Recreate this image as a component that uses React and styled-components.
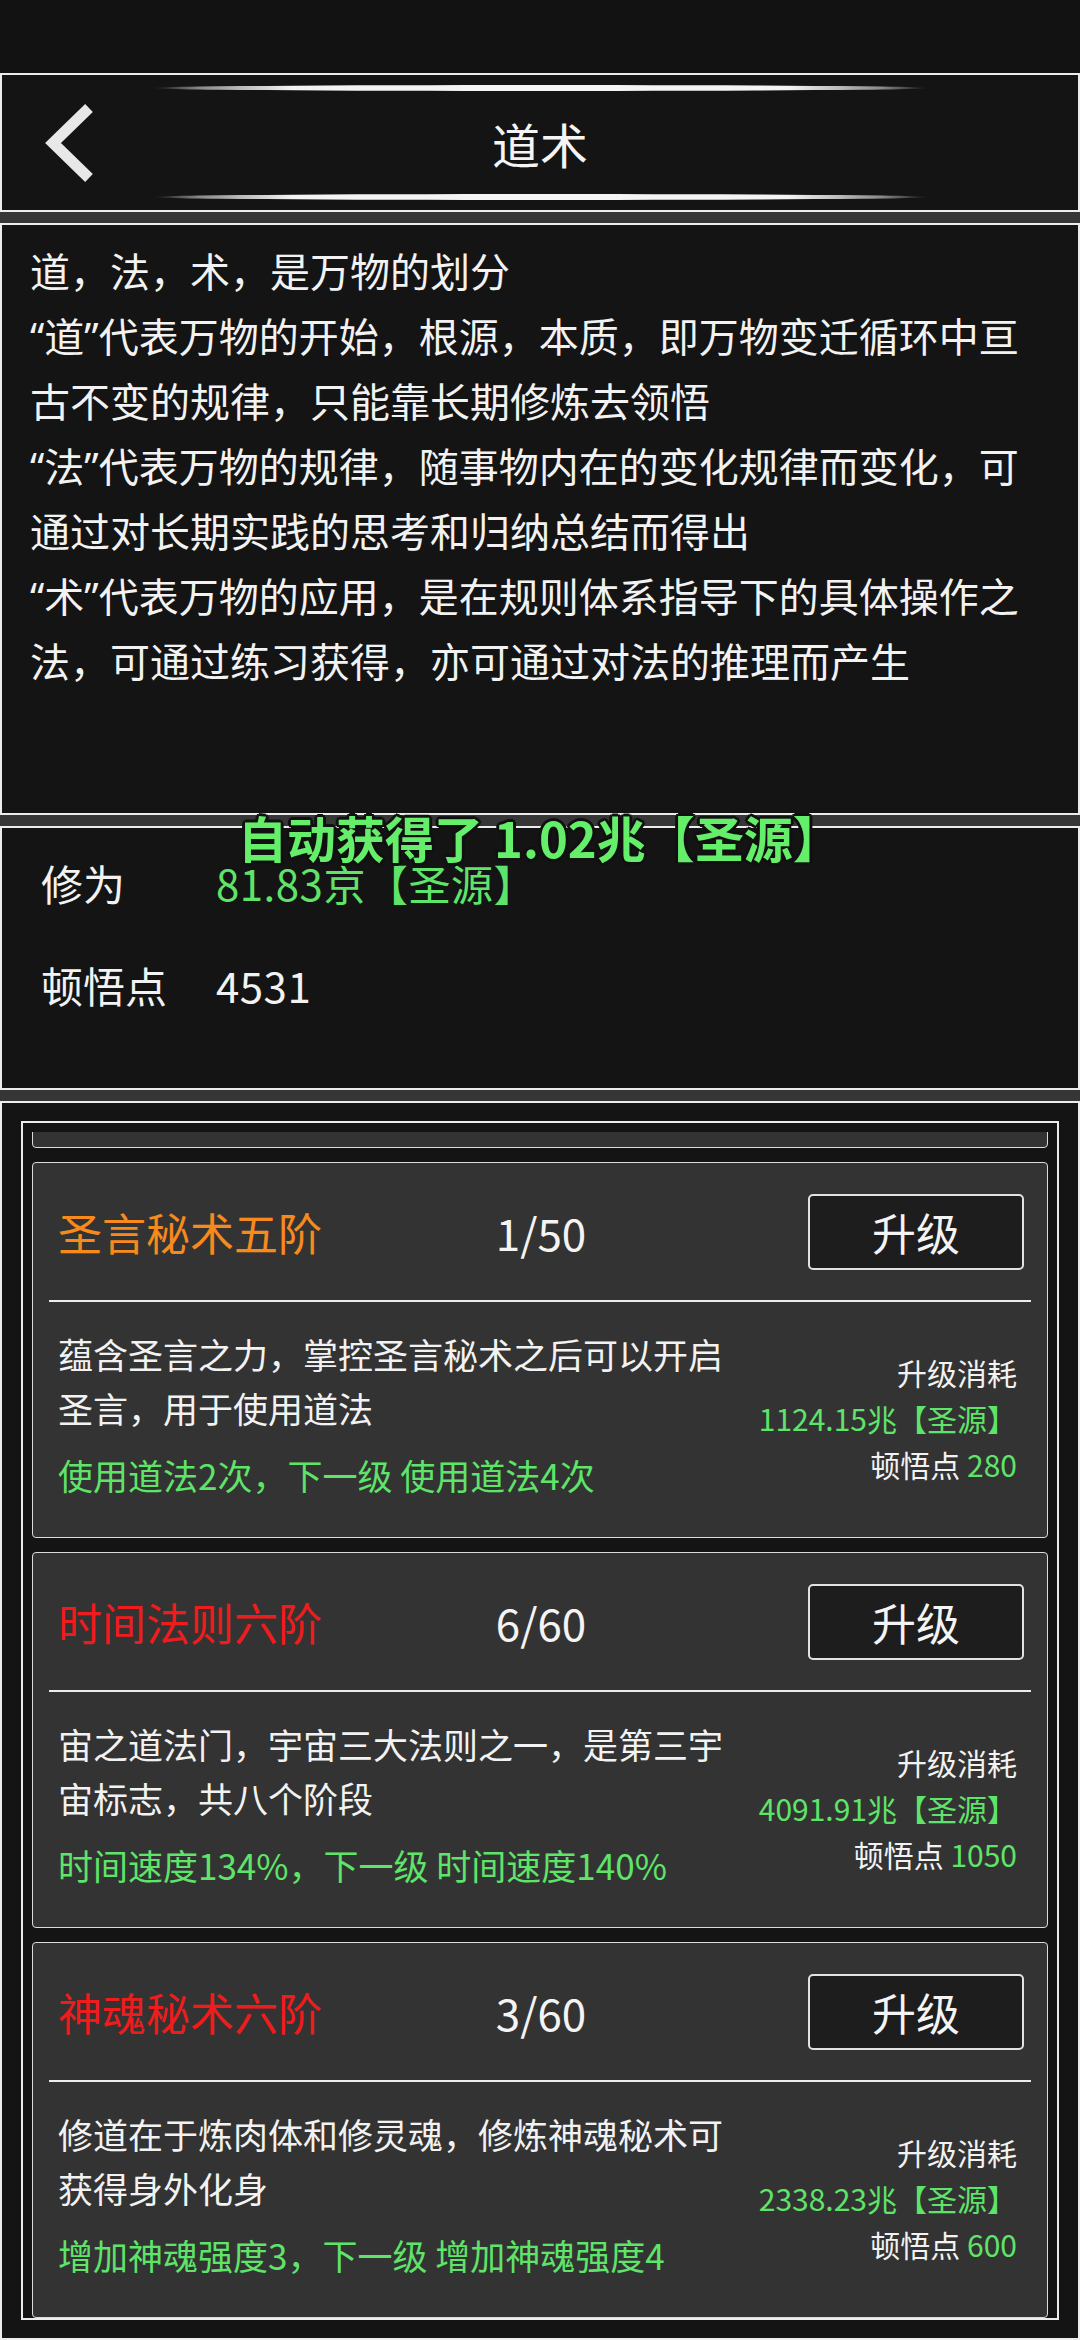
import React, { useLayoutEffect, useRef } from 'react'
import styled, { createGlobalStyle } from 'styled-components'

const GlobalStyle = createGlobalStyle`
  * {
    box-sizing: border-box;
  }
  html,
  body {
    margin: 0;
    padding: 0;
    background-color: #363636;
  }
  body {
    width: 1080px;
    height: 2340px;
    overflow: hidden;
    font-family: 'Noto Sans CJK SC', 'Noto Sans', sans-serif;
    color: #f2f2f2;
  }
`

const GREEN = '#5fe46a'

const StyledStatusBar = styled.div`
  height: 73px;
  background-color: #121212;
`

const StyledPanel = styled.section`
  position: relative;
  background-color: #141414;
  border: 2px solid #ececec;
  ${({ $gap }) => $gap && 'margin-top: 11px;'}
  ${({ $height }) => $height && `height: ${$height}px;`}
`

const StyledHeader = styled(StyledPanel)`
  display: flex;
  flex-direction: column;
  align-items: center;
  padding: 10px 0;
`

const StyledGlowLine = styled.div`
  width: 775px;
  height: 6px;
  border-radius: 50%;
  background: linear-gradient(
    90deg,
    rgba(242, 242, 242, 0) 0%,
    #8a8a8a 6%,
    #f4f4f4 18%,
    #f4f4f4 82%,
    #8a8a8a 94%,
    rgba(242, 242, 242, 0) 100%
  );
`

const StyledTitleRow = styled.div`
  flex: 1;
  align-self: stretch;
  display: grid;
  grid-template-columns: 1fr auto 1fr;
  align-items: center;
  padding: 0 38px;
`

const StyledBack = styled.svg`
  display: block;
  width: 60px;
  height: 80px;
`

const StyledTitle = styled.h1`
  margin: 0;
  font-size: 48px;
  font-weight: 400;
  line-height: 1;
  color: #f4f4f4;
`

// quotes come from the latin face so they stay narrow like the reference
const StyledIntro = styled.div`
  padding: 14px 28px 0;
  font-family: 'Noto Sans', 'Noto Sans CJK SC', sans-serif;
  font-size: 40px;
  line-height: 65px;
`

const StyledIntroLine = styled.p`
  margin: 0;
`

const StyledStats = styled.div`
  display: grid;
  grid-template-columns: 175px 1fr;
  row-gap: 42px;
  padding: 25px 0 0 39px;
  font-size: 42px;
  line-height: 60px;
`

const StyledStatValue = styled.span`
  color: ${({ $green }) => ($green ? GREEN : '#f2f2f2')};
  letter-spacing: 0.5px;
`

const StyledToast = styled.div`
  position: absolute;
  top: -16px;
  left: 236px;
  font-size: 49px;
  font-weight: 700;
  line-height: 50px;
  color: #64ee6a;
  white-space: nowrap;
  text-shadow:
    -2px -2px 0 #111,
    2px -2px 0 #111,
    -2px 2px 0 #111,
    2px 2px 0 #111,
    0 -3px 0 #111,
    0 3px 0 #111,
    -3px 0 0 #111,
    3px 0 0 #111;
`

const StyledSkills = styled(StyledPanel)`
  padding: 18px 19px;
`

const StyledListBox = styled.div`
  border: 2px solid #ececec;
  padding: 9px 9px 0;
`

const StyledScroller = styled.div`
  height: 1186px;
  overflow: hidden;
  display: flex;
  flex-direction: column;
  gap: 14px;
`

const StyledCard = styled.div`
  flex-shrink: 0;
  background-color: #333;
  border: 1px solid #dcdcdc;
  border-radius: 4px;
`

const StyledCardHead = styled.div`
  height: 137px;
  display: grid;
  grid-template-columns: 1fr auto 1fr;
  align-items: center;
  padding: 0 23px 0 25px;
  font-size: 44px;
`

const StyledSkillName = styled.span`
  color: ${({ $color }) => $color};
`

const StyledLevel = styled.span`
  color: #f4f4f4;
`

const StyledUpgradeButton = styled.button`
  justify-self: end;
  width: 216px;
  height: 76px;
  padding: 0;
  background-color: #1d1d1d;
  border: 2px solid #e2e2e2;
  border-radius: 5px;
  font-family: inherit;
  font-size: 44px;
  color: #f4f4f4;
`

const StyledDivider = styled.div`
  height: 2px;
  margin: 0 16px;
  background-color: #ececec;
`

const StyledCardBody = styled.div`
  display: grid;
  grid-template-columns: 680px 1fr;
  align-items: center;
  padding: 25px 30px 35px 25px;
`

const StyledDesc = styled.p`
  margin: 0;
  font-size: 35px;
  line-height: 54px;
  color: #f2f2f2;
`

const StyledEffect = styled.p`
  margin: 13px 0 0;
  font-size: 35px;
  line-height: 54px;
  color: ${GREEN};
  white-space: nowrap;
`

const StyledCost = styled.div`
  margin-top: 7px;
  text-align: right;
  font-size: 30px;
  line-height: 46px;
  white-space: nowrap;
`

const StyledGreen = styled.span`
  color: ${GREEN};
`

const skills = [
  {
    id: 'kong',
    name: '空间法则五阶',
    color: '#ee1c1c',
    level: '5/60',
    desc: '宇之道法门，宇宙三大法则之一，掌控空间之力',
    effect: '空间距离120%，下一级 空间距离125%',
    cost: '986.40兆【圣源】',
    points: '240',
  },
  {
    id: 'shengyan',
    name: '圣言秘术五阶',
    color: '#f7891d',
    level: '1/50',
    desc: '蕴含圣言之力，掌控圣言秘术之后可以开启圣言，用于使用道法',
    effect: '使用道法2次，下一级 使用道法4次',
    cost: '1124.15兆【圣源】',
    points: '280',
  },
  {
    id: 'shijian',
    name: '时间法则六阶',
    color: '#ee1c1c',
    level: '6/60',
    desc: '宙之道法门，宇宙三大法则之一，是第三宇宙标志，共八个阶段',
    effect: '时间速度134%，下一级 时间速度140%',
    cost: '4091.91兆【圣源】',
    points: '1050',
  },
  {
    id: 'shenhun',
    name: '神魂秘术六阶',
    color: '#ee1c1c',
    level: '3/60',
    desc: '修道在于炼肉体和修灵魂，修炼神魂秘术可获得身外化身',
    effect: '增加神魂强度3，下一级 增加神魂强度4',
    cost: '2338.23兆【圣源】',
    points: '600',
  },
]

const intro = [
  '道，法，术，是万物的划分',
  '“道”代表万物的开始，根源，本质，即万物变迁循环中亘古不变的规律，只能靠长期修炼去领悟',
  '“法”代表万物的规律，随事物内在的变化规律而变化，可通过对长期实践的思考和归纳总结而得出',
  '“术”代表万物的应用，是在规则体系指导下的具体操作之法，可通过练习获得，亦可通过对法的推理而产生',
]

// SkillCard Component
const SkillCard = ({ name, color, level, desc, effect, cost, points }) => (
  <StyledCard>
    <StyledCardHead>
      <StyledSkillName $color={color}>{name}</StyledSkillName>
      <StyledLevel>{level}</StyledLevel>
      <StyledUpgradeButton>升级</StyledUpgradeButton>
    </StyledCardHead>
    <StyledDivider />
    <StyledCardBody>
      <div>
        <StyledDesc>{desc}</StyledDesc>
        <StyledEffect>{effect}</StyledEffect>
      </div>
      <StyledCost>
        <div>升级消耗</div>
        <StyledGreen as="div">{cost}</StyledGreen>
        <div>
          顿悟点 <StyledGreen>{points}</StyledGreen>
        </div>
      </StyledCost>
    </StyledCardBody>
  </StyledCard>
)

// App Component
const App = () => {
  const scrollerRef = useRef(null)

  useLayoutEffect(() => {
    // list is scrolled so only the bottom edge of the first card shows
    if (scrollerRef.current) scrollerRef.current.scrollTop = 361
  }, [])

  return (
    <>
      <GlobalStyle />
      <StyledStatusBar />

      <StyledHeader $height={139}>
        <StyledGlowLine />
        <StyledTitleRow>
          <StyledBack viewBox="0 0 60 80">
            <polyline
              points="49,5 13,40 49,75"
              fill="none"
              stroke="#e8e8e8"
              strokeWidth="11"
              strokeLinecap="butt"
              strokeLinejoin="miter"
            />
          </StyledBack>
          <StyledTitle>道术</StyledTitle>
          <span />
        </StyledTitleRow>
        <StyledGlowLine />
      </StyledHeader>

      <StyledPanel $gap $height={592}>
        <StyledIntro>
          {intro.map(line => (
            <StyledIntroLine key={line}>{line}</StyledIntroLine>
          ))}
        </StyledIntro>
      </StyledPanel>

      <StyledPanel $gap $height={264}>
        <StyledStats>
          <span>修为</span>
          <StyledStatValue $green>81.83京【圣源】</StyledStatValue>
          <span>顿悟点</span>
          <StyledStatValue>4531</StyledStatValue>
        </StyledStats>
        <StyledToast>自动获得了 1.02兆【圣源】</StyledToast>
      </StyledPanel>

      <StyledSkills $gap $height={1239}>
        <StyledListBox>
          <StyledScroller ref={scrollerRef}>
            {skills.map(skill => (
              <SkillCard key={skill.id} {...skill} />
            ))}
          </StyledScroller>
        </StyledListBox>
      </StyledSkills>
    </>
  )
}

export default App
